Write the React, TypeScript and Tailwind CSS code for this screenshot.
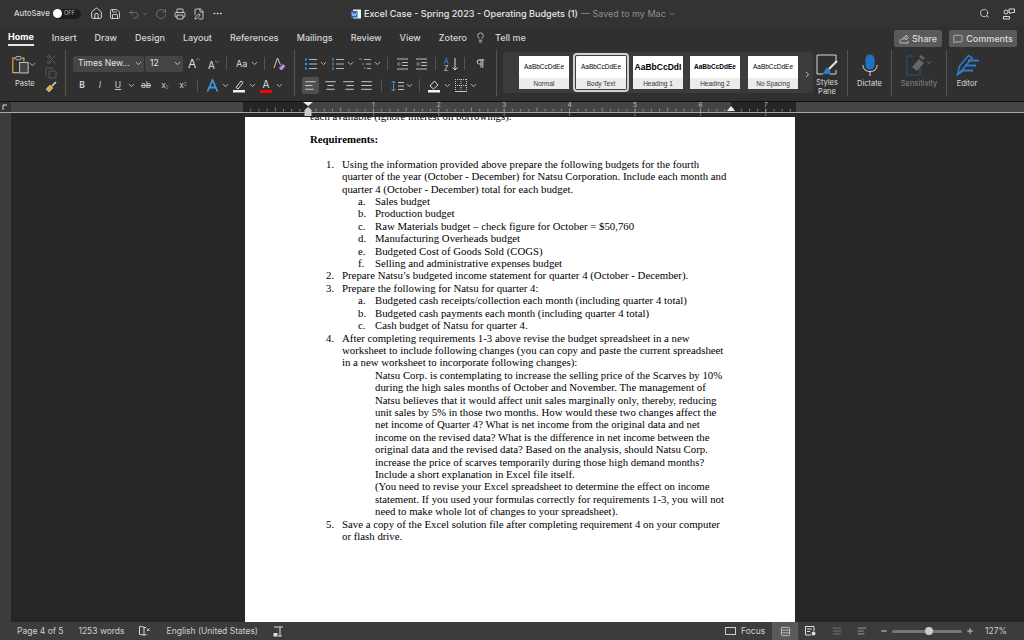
import React from 'react';
import {
  House, Save, Undo2, RotateCw, Printer, MoreHorizontal, Search, Lightbulb, MessageSquare, Scissors, Copy,
  ChevronDown, ChevronRight, AlignLeft, AlignCenter, AlignRight, AlignJustify, FilePen, Rows3, Minus, Plus,
  Pilcrow,
} from 'lucide-react';

const ui = "font-['Inter',sans-serif]";

const tabs = ['Insert', 'Draw', 'Design', 'Layout', 'References', 'Mailings', 'Review', 'View', 'Zotero'];

const lines: { t: string; n?: string; cls: string }[] = [
  { n: '1.', t: 'Using the information provided above prepare the following budgets for the fourth', cls: 'ml-[16px]' },
  { t: 'quarter of the year (October - December) for Natsu Corporation. Include each month and', cls: 'ml-[32px]' },
  { t: 'quarter 4 (October - December) total for each budget.', cls: 'ml-[32px]' },
  { n: 'a.', t: 'Sales budget', cls: 'ml-[48px]' },
  { n: 'b.', t: 'Production budget', cls: 'ml-[48px]' },
  { n: 'c.', t: 'Raw Materials budget – check figure for October = $50,760', cls: 'ml-[48px]' },
  { n: 'd.', t: 'Manufacturing Overheads budget', cls: 'ml-[48px]' },
  { n: 'e.', t: 'Budgeted Cost of Goods Sold (COGS)', cls: 'ml-[48px]' },
  { n: 'f.', t: 'Selling and administrative expenses budget', cls: 'ml-[48px]' },
  { n: '2.', t: 'Prepare Natsu’s budgeted income statement for quarter 4 (October - December).', cls: 'ml-[16px]' },
  { n: '3.', t: 'Prepare the following for Natsu for quarter 4:', cls: 'ml-[16px]' },
  { n: 'a.', t: 'Budgeted cash receipts/collection each month (including quarter 4 total)', cls: 'ml-[48px]' },
  { n: 'b.', t: 'Budgeted cash payments each month (including quarter 4 total)', cls: 'ml-[48px]' },
  { n: 'c.', t: 'Cash budget of Natsu for quarter 4.', cls: 'ml-[48px]' },
  { n: '4.', t: 'After completing requirements 1-3 above revise the budget spreadsheet in a new', cls: 'ml-[16px]' },
  { t: 'worksheet to include following changes (you can copy and paste the current spreadsheet', cls: 'ml-[32px]' },
  { t: 'in a new worksheet to incorporate following changes):', cls: 'ml-[32px]' },
  { t: 'Natsu Corp. is contemplating to increase the selling price of the Scarves by 10%', cls: 'ml-[65px]' },
  { t: 'during the high sales months of October and November. The management of', cls: 'ml-[65px]' },
  { t: 'Natsu believes that it would affect unit sales marginally only, thereby, reducing', cls: 'ml-[65px]' },
  { t: 'unit sales by 5% in those two months. How would these two changes affect the', cls: 'ml-[65px]' },
  { t: 'net income of Quarter 4? What is net income from the original data and net', cls: 'ml-[65px]' },
  { t: 'income on the revised data? What is the difference in net income between the', cls: 'ml-[65px]' },
  { t: 'original data and the revised data? Based on the analysis, should Natsu Corp.', cls: 'ml-[65px]' },
  { t: 'increase the price of scarves temporarily during those high demand months?', cls: 'ml-[65px]' },
  { t: 'Include a short explanation in Excel file itself.', cls: 'ml-[65px]' },
  { t: '(You need to revise your Excel spreadsheet to determine the effect on income', cls: 'ml-[65px]' },
  { t: 'statement. If you used your formulas correctly for requirements 1-3, you will not', cls: 'ml-[65px]' },
  { t: 'need to make whole lot of changes to your spreadsheet).', cls: 'ml-[65px]' },
  { n: '5.', t: 'Save a copy of the Excel solution file after completing requirement 4 on your computer', cls: 'ml-[16px]' },
  { t: 'or flash drive.', cls: 'ml-[32px]' },
];

const styleCards: { label: string; ml: string; cls: string }[] = [
  { label: 'Normal', ml: 'ml-[16px]', cls: 'text-[6.5px] font-medium' },
  { label: 'Body Text', ml: 'ml-[7px]', cls: 'text-[6.5px] font-medium' },
  { label: 'Heading 1', ml: 'ml-[7px]', cls: 'text-[8.5px] font-bold' },
  { label: 'Heading 2', ml: 'ml-[7px]', cls: 'text-[6.5px] font-semibold' },
  { label: 'No Spacing', ml: 'ml-[8px]', cls: 'text-[6.5px] font-medium' },
];

function Chev({ className = '' }: { className?: string }) {
  return <ChevronDown size={9} strokeWidth={2.2} className={`text-[#d0d0d0] shrink-0 ${className}`} />;
}

function Sep({ className = 'h-[14px]' }: { className?: string }) {
  return <span className={`w-px bg-[#555555] shrink-0 ${className}`} />;
}

function PasteIcon() {
  return (
    <svg width="20" height="21" viewBox="0 0 20 21" fill="none">
      <path d="M4 3H1V20H8" stroke="#e0a64e" strokeWidth="1.4" />
      <path d="M11 3H14V7" stroke="#e0a64e" strokeWidth="1.4" />
      <rect x="4.5" y="1" width="6" height="4" rx="1" fill="#303030" stroke="#cfcfcf" />
      <rect x="9" y="8" width="10" height="12.5" fill="#444" stroke="#ddd" />
    </svg>
  );
}

function BrushIcon() {
  return (
    <svg width="12" height="12" viewBox="0 0 12 12" fill="none">
      <path d="M1 8L5 4L8 7L4 11Z" fill="#e0a64e" stroke="#e8d4a0" strokeWidth="0.6" />
      <path d="M7 5L11 1" stroke="#ddd" strokeWidth="1.6" />
    </svg>
  );
}

function GrowA({ small }: { small?: boolean }) {
  return (
    <span className={`flex items-start text-[#dcdcdc] leading-none ${small ? 'ml-[8px] w-[10px] text-[10px] pt-[2px]' : 'ml-[5px] w-[12px] text-[12px]'}`}>
      A
      <svg width="4" height="3" viewBox="0 0 4 3" className="shrink-0" fill="none">
        <path d={small ? 'M0 0.5L2 2.5L4 0.5' : 'M0 2.5L2 0.5L4 2.5'} stroke="#4a9fe8" strokeWidth="0.8" />
      </svg>
    </span>
  );
}

function TextFx() {
  return (
    <svg width="13" height="13" viewBox="0 0 13 13" fill="none">
      <path d="M1.5 12.5L6.5 1L11.5 12.5M3.8 8.5H9.2" stroke="#3f94de" strokeWidth="1.8" />
    </svg>
  );
}

function Pen() {
  return (
    <svg width="14" height="14" viewBox="0 0 14 14" fill="none">
      <path d="M4 8.5L9 2L11 3.5L6 10Z" stroke="#ddd" />
      <rect x="1" y="11" width="12" height="2.5" fill="#f2f2f2" />
    </svg>
  );
}

function ColorA() {
  return (
    <span className="ml-[3px] w-[12px] flex flex-col items-center leading-none">
      <span className="text-[10px] h-[11px] text-[#ddd]">A</span>
      <span className="w-[12px] h-[3px] bg-[#ff0000]" />
    </span>
  );
}

function FillIcon() {
  return (
    <svg width="14" height="14" viewBox="0 0 14 14" fill="none">
      <path d="M3 7L7.5 2L11 6L6.5 10Z" stroke="#ddd" />
      <rect x="1" y="11" width="12" height="2.5" fill="#f2f2f2" />
    </svg>
  );
}

function BordersIcon() {
  return (
    <svg width="12" height="13" viewBox="0 0 12 13" fill="none" stroke="#c4c4c4" strokeDasharray="1 1">
      <path d="M0 0.5H12M0 6.5H12M6 0V13M0.5 0V13M11.5 0V13" />
      <path d="M0 12.5H12" strokeDasharray="none" />
    </svg>
  );
}

function SpacingIcon() {
  return (
    <svg width="13" height="12" viewBox="0 0 13 12" fill="none">
      <path d="M2.5 1V11M0.5 3L2.5 1L4.5 3M0.5 9L2.5 11L4.5 9" stroke="#3f94de" />
      <path d="M7 2.5H13M7 6H13M7 9.5H13" stroke="#c4c4c4" />
    </svg>
  );
}

function SortIcon() {
  return (
    <svg width="16" height="14" viewBox="0 0 16 14" fill="none">
      <text x="0" y="6.5" fontSize="7" fill="#3f94de" fontFamily="Inter">A</text>
      <text x="0" y="13.5" fontSize="7" fill="#ddd" fontFamily="Inter">Z</text>
      <path d="M11 1V13M8.5 10.5L11 13L13.5 10.5" stroke="#ddd" />
    </svg>
  );
}

function ClearFormat() {
  return (
    <svg width="13" height="14" viewBox="0 0 13 14" fill="none">
      <path d="M1 11L4.5 1L7.5 8" stroke="#ccc" />
      <path d="M6 11L10 7L12.5 9L9 13H7.5Z" fill="#c58ad8" />
    </svg>
  );
}

function ListIcon({ kind }: { kind: 'bullet' | 'number' | 'multi' }) {
  return (
    <svg width="12" height="12" viewBox="0 0 12 12" fill="none">
      {kind === 'bullet' && (
        <path d="M0 1.5H2M0 6H2M0 10.5H2" stroke="#3f94de" strokeWidth="2" />
      )}
      {kind === 'number' && <path d="M1 0V3M1 4.5V7.5M1 9V12" stroke="#3f94de" strokeWidth="1.2" />}
      {kind === 'multi' && <path d="M0 1H3M4 5V7M6 9V11" stroke="#3f94de" strokeWidth="1.2" />}
      <path d={kind === 'multi' ? 'M5 1.5H12M7 6H12M8 10.5H12' : 'M4 1.5H12M4 6H12M4 10.5H12'} stroke="#b4b4b4" />
    </svg>
  );
}

function IndentIcon({ dir }: { dir: 'in' | 'out' }) {
  return (
    <svg width="11" height="12" viewBox="0 0 11 12" fill="none">
      <path d="M0 1H11M5 4.5H11M5 7.5H11M0 11H11" stroke="#bdbdbd" />
      <path d={dir === 'out' ? 'M4 6H0.5M2.5 4L0.5 6L2.5 8' : 'M0 6H3.5M1.5 4L3.5 6L1.5 8'} stroke="#3f94de" />
    </svg>
  );
}

function StylesPaneIcon() {
  return (
    <svg width="22" height="21" viewBox="0 0 22 21" fill="none">
      <path d="M20 9V1H1V20H7M20 16V20H14" stroke="#d8d8d8" />
      <path d="M21 7L13 15" stroke="#e0e0e0" strokeWidth="2.2" />
      <path d="M11 13.5C9 15 9 18 6 20H14C15 18 14 15 11 13.5Z" fill="#2e7dd0" />
    </svg>
  );
}

function MicIcon() {
  return (
    <svg width="16" height="22" viewBox="0 0 16 22" fill="none">
      <rect x="3.5" y="0.5" width="9" height="15" rx="4.5" fill="#2272c4" />
      <path d="M1 11C1 15.5 4 17.5 8 17.5C12 17.5 15 15.5 15 11M8 17.5V22" stroke="#ddd" />
    </svg>
  );
}

function SensitivityIcon() {
  return (
    <svg width="26" height="22" viewBox="0 0 26 22" fill="none">
      <path d="M1 2H8M1 2V21H14V14" stroke="#24527c" strokeWidth="1.2" />
      <path d="M6 13L13 5L18 9L11 17Z" fill="#666" />
      <path d="M13 3L15 1L19 4L17 6Z" fill="#666" />
      <path d="M21 7.5L23 9.5L25 7.5" stroke="#777" />
    </svg>
  );
}

function EditorIcon() {
  return (
    <svg width="23" height="22" viewBox="0 0 23 22" fill="none">
      <path d="M1.5 20.5L3.5 12L12.5 1.5L16 4L7 15Z" stroke="#2e7dd0" strokeWidth="1.5" />
      <path d="M1.5 20.5L7 17" stroke="#2e7dd0" strokeWidth="1.5" />
      <path d="M12 6.5H23M9 11.5H20M7 16.5H17" stroke="#2e7dd0" strokeWidth="2" />
    </svg>
  );
}

function DocIcon() {
  return (
    <svg width="10" height="10" viewBox="0 0 10 10">
      <rect x="2" y="0.5" width="8" height="9" fill="#f2f2f2" />
      <rect x="0" y="2" width="6.5" height="6.5" fill="#2466c4" />
      <path d="M1 3.5L2 7L3.2 4.5L4.4 7L5.5 3.5" stroke="#fff" strokeWidth="0.6" fill="none" />
    </svg>
  );
}

function PeopleIcon() {
  return (
    <svg width="12" height="12" viewBox="0 0 12 12" fill="none" stroke="#ddd">
      <circle cx="3" cy="4" r="2" />
      <path d="M0.5 11V8.5H6.5V11Z" />
      <path d="M6 1H11.5V4.5H8.5L7 6V4.5H6Z" />
    </svg>
  );
}

function BookX() {
  return (
    <svg width="11" height="10" viewBox="0 0 11 10" fill="none" stroke="#ddd">
      <path d="M5 1.5C4 0.5 2 0.5 0.5 0.5V8.5C2 8.5 4 8.5 5 9.5V1.5Z" />
      <path d="M5 1.5H7M5 9.5C6 8.5 7 8.5 8 8.5" />
      <path d="M8 2.5L10.5 5M10.5 2.5L8 5" />
    </svg>
  );
}

function TrackIcon() {
  return (
    <svg width="11" height="11" viewBox="0 0 11 11" fill="none">
      <path d="M1 1H10M7 1V10M5 10H9" stroke="#ddd" />
      <rect x="0.5" y="7" width="4" height="3.5" fill="#ddd" />
    </svg>
  );
}

function WebIcon() {
  return (
    <svg width="11" height="10" viewBox="0 0 11 10" fill="none" stroke="#ddd">
      <path d="M6 9H0.5V0.5H9V5M2 3H7M2 5.5H5" />
      <circle cx="8.5" cy="7.5" r="2" fill="#ddd" stroke="none" />
    </svg>
  );
}

function Ruler() {
  const marks: React.ReactNode[] = [];
  const x0 = 308;
  const step = 65.4;
  for (let i = -1; i < 8; i++) {
    for (let j = 0; j < 8; j++) {
      const x = x0 + (i + j / 8) * step;
      if (x < 245 || x > 795) continue;
      marks.push(
        <line key={`${i}-${j}`} x1={x} x2={x} y1={j === 4 ? 107.5 : 109} y2={111.5} stroke="#a8a8a8" strokeWidth="0.7" />,
      );
    }
    if (i > 0) {
      marks.push(
        <text key={`n${i}`} x={x0 + i * step} y="107" fontSize="6.5" fill="#c0c0c0" textAnchor="middle" fontFamily="Inter">{i}</text>,
      );
      marks.push(<line key={`l${i}`} x1={x0 + i * step} x2={x0 + i * step} y1="108" y2="116" stroke="#999" strokeWidth="0.7" />);
    }
  }
  return (
    <svg width="1024" height="15" viewBox="0 102 1024 15" className="block">
      <rect x="0" y="102" width="11" height="11" fill="#333" />
      <rect x="11" y="102" width="1013" height="11" fill="#454545" />
      <rect x="243" y="102" width="65" height="11" fill="#252525" />
      <rect x="731" y="102" width="65" height="11" fill="#252525" />
      <rect x="0" y="112" width="1024" height="1" fill="#a8a8a8" />
      <rect x="0" y="113" width="11" height="4" fill="#3c3c3c" />
      <rect x="11" y="113" width="1013" height="4" fill="#262626" />
      {marks}
      <path d="M303 102H313L308 106Z" fill="#eee" />
      <path d="M308 107L311.5 110V116H304.5V110Z" fill="#ccc" />
      <path d="M727 111L731 106L735 111Z" fill="#eee" />
      <path d="M3 110V105H7" stroke="#ddd" fill="none" />
    </svg>
  );
}

export default function App() {
  return (
    <div className={`w-[1024px] h-[640px] overflow-hidden flex flex-col bg-[#262626] text-[#e2e2e2] ${ui}`}>
      {/* title bar */}
      <div className="h-[27px] bg-[#333333] flex items-center shrink-0">
        <span className="ml-[14px] w-[35px] text-[7.8px] font-medium text-[#d8d8d8]">AutoSave</span>
        <span className="ml-[4px] w-[28px] h-[10px] rounded-full bg-[#1c1c1c] flex items-center">
          <span className="w-[9px] h-[9px] rounded-full bg-white" />
          <span className="ml-[2px] text-[5.5px] text-[#bbb]">OFF</span>
        </span>
        <House size={13} strokeWidth={1.7} className="ml-[9px] text-[#e0e0e0]" />
        <Save size={12} strokeWidth={1.7} className="ml-[6px] text-[#e0e0e0]" />
        <Undo2 size={12} strokeWidth={1.7} className="ml-[7px] text-[#777]" />
        <ChevronDown size={8} strokeWidth={2} className="ml-[1px] text-[#777]" />
        <RotateCw size={12} strokeWidth={1.7} className="ml-[6px] text-[#777]" />
        <Printer size={12} strokeWidth={1.7} className="ml-[7px] text-[#e0e0e0]" />
        <FilePen size={12} strokeWidth={1.7} className="ml-[7px] text-[#e0e0e0]" />
        <MoreHorizontal size={11} strokeWidth={2} className="ml-[7px] text-[#e0e0e0]" />
        <span className="ml-[128px]"><DocIcon /></span>
        <span className="ml-[3px] text-[9.1px] font-medium whitespace-nowrap text-[#e6e6e6]">Excel Case - Spring 2023 - Operating Budgets (1)</span>
        <span className="ml-[3px] text-[9px] whitespace-nowrap text-[#8f8f8f]">— Saved to my Mac</span>
        <ChevronDown size={8} strokeWidth={2} className="ml-[2px] text-[#8f8f8f]" />
        <Search size={11} strokeWidth={1.7} className="ml-auto text-[#ddd]" />
        <span className="ml-[13px] mr-[9px]"><PeopleIcon /></span>
      </div>

      {/* tab row */}
      <div className="h-[23px] bg-[#303030] flex items-center shrink-0 text-[9px] font-medium text-[#d4d4d4]">
        <div className="flex items-center gap-[18px] ml-[8px] h-[19px] self-start">
          <span className="h-full pt-[2px] flex items-center border-b-2 border-[#e6e6e6] font-bold text-white">Home</span>
          {tabs.map((label) => (
            <span key={label} className="pt-[2px]">{label}</span>
          ))}
        </div>
        <div className="flex items-center h-[19px] self-start pt-[2px]">
          <Lightbulb size={11} strokeWidth={1.7} className="ml-[8px] text-[#ddd]" />
          <span className="ml-[9px]">Tell me</span>
        </div>
        <span className="ml-auto w-[48px] h-[17px] rounded-[2px] bg-[#5a5a5a] flex items-center justify-center gap-[3px] text-[#dcdcdc]">
          <svg width="10" height="10" viewBox="0 0 10 10" fill="none" stroke="#bbb"><path d="M1 5V9H9V7M3 6C3 4 5 3 7 3V1L9.5 3.5L7 6V4.5C5 4.5 4 5 3 6Z" /></svg>
          Share
        </span>
        <span className="ml-[7px] mr-[7px] w-[68px] h-[17px] rounded-[2px] bg-[#5a5a5a] flex items-center justify-center gap-[3px] text-[#dcdcdc]">
          <MessageSquare size={10} strokeWidth={1.6} />Comments
        </span>
      </div>

      {/* ribbon */}
      <div className="h-[52px] bg-[#303030] flex items-start shrink-0 border-b border-[#111]">
        {/* clipboard */}
        <div className="w-[65px] flex pl-[12px] pt-[4px] shrink-0">
          <div className="flex flex-col w-[25px]">
            <div className="flex items-center"><PasteIcon /><Chev className="-ml-px" /></div>
            <span className="ml-[3px] mt-[4px] text-[7.5px] leading-[9px] text-[#ddd]">Paste</span>
          </div>
          <div className="flex flex-col items-center ml-[8px] gap-[2px] text-[#666]">
            <Scissors size={11} strokeWidth={1.6} />
            <Copy size={12} strokeWidth={1.6} />
            <BrushIcon />
          </div>
        </div>
        <Sep className="h-[46px]" />

        {/* font */}
        <div className="w-[228px] pl-[7px] shrink-0 flex flex-col">
          <div className="flex items-center h-[17px] mt-[5px]">
            <span className="w-[71px] h-[16px] rounded-[2px] bg-[#454545] flex items-center pl-[5px] text-[8.5px] text-[#e6e6e6]">
              Times New...<ChevronDown size={9} strokeWidth={2} className="ml-auto mr-[1px]" />
            </span>
            <span className="ml-[1px] w-[38px] h-[16px] rounded-[2px] bg-[#454545] flex items-center pl-[5px] text-[8.5px] text-[#e6e6e6]">
              12<ChevronDown size={9} strokeWidth={2} className="ml-auto mr-[1px]" />
            </span>
            <GrowA />
            <GrowA small />
            <Sep className="h-[13px] ml-[8px]" />
            <span className="ml-[9px] w-[12px] text-[9px] text-[#ddd]">Aa</span>
            <Chev className="ml-[2px]" />
            <Sep className="h-[13px] ml-[5px]" />
            <span className="ml-[8px]"><ClearFormat /></span>
          </div>
          <div className="flex items-center h-[17px] mt-[5px] text-[8.5px] text-[#ccc]">
            <span className="ml-[4px] w-[10px] text-center font-bold">B</span>
            <span className="ml-[8px] w-[10px] text-center italic">I</span>
            <span className="ml-[8px] w-[10px] text-center underline">U</span>
            <Chev className="ml-[4px]" />
            <span className="ml-[4px] w-[12px] text-center line-through">ab</span>
            <span className="ml-[7px] w-[12px] text-center">x<sub className="text-[5px] text-[#4a9fe8]">2</sub></span>
            <span className="ml-[6px] w-[12px] text-center">x<sup className="text-[5px] text-[#4a9fe8]">2</sup></span>
            <Sep className="h-[13px] ml-[8px]" />
            <span className="ml-[8px]"><TextFx /></span>
            <Chev className="ml-[2px]" />
            <span className="ml-[2px]"><Pen /></span>
            <Chev className="ml-[2px]" />
            <ColorA />
            <Chev className="ml-[3px]" />
          </div>
        </div>
        <Sep className="h-[46px]" />

        {/* paragraph */}
        <div className="w-[201px] shrink-0 flex flex-col text-[#d4d4d4]">
          <div className="flex items-center h-[17px] mt-[5px]">
            <span className="ml-[10px]"><ListIcon kind="bullet" /></span>
            <Chev className="ml-[2px]" />
            <span className="ml-[4px]"><ListIcon kind="number" /></span>
            <Chev className="ml-[2px]" />
            <span className="ml-[4px]"><ListIcon kind="multi" /></span>
            <Chev className="ml-[2px]" />
            <Sep className="h-[13px] ml-[5px]" />
            <span className="ml-[9px]"><IndentIcon dir="out" /></span>
            <span className="ml-[8px]"><IndentIcon dir="in" /></span>
            <Sep className="h-[13px] ml-[8px]" />
            <span className="ml-[8px]"><SortIcon /></span>
            <Sep className="h-[13px] ml-[4px]" />
            <Pilcrow size={11} strokeWidth={2.4} className="ml-[10px] text-[#bbb]" />
          </div>
          <div className="flex items-center h-[17px] mt-[5px]">
            <span className="ml-[7px] w-[17px] h-[17px] rounded-[2px] bg-[#4f4f4f] flex items-center justify-center"><AlignLeft size={13} strokeWidth={1.7} /></span>
            <AlignCenter size={13} strokeWidth={1.7} className="ml-[5px]" />
            <AlignRight size={13} strokeWidth={1.7} className="ml-[5px]" />
            <AlignJustify size={13} strokeWidth={1.7} className="ml-[5px]" />
            <Sep className="h-[13px] ml-[8px]" />
            <span className="ml-[9px]"><SpacingIcon /></span>
            <Chev className="ml-[1px]" />
            <Sep className="h-[13px] ml-[5px]" />
            <span className="ml-[7px]"><FillIcon /></span>
            <Chev className="ml-[2px]" />
            <span className="ml-[3px]"><BordersIcon /></span>
            <Chev className="ml-[2px]" />
          </div>
        </div>
        <Sep className="h-[46px]" />

        {/* styles gallery */}
        <div className="ml-[6px] mt-[2px] w-[310px] h-[41px] bg-[#3c3c3c] rounded-[3px] flex items-start pt-[4px] shrink-0">
          {styleCards.map((c, i) => (
            <div
              key={c.label}
              className={`${c.ml} w-[50px] h-[33px] bg-white flex flex-col items-center text-black font-['Liberation_Sans',sans-serif] ${i === 1 ? 'outline-2 outline-offset-1 outline-[#d0d0d0] rounded-[1px]' : ''}`}
            >
              <span className={`h-[22px] flex items-center whitespace-nowrap ${c.cls}`}>{c.label === 'Heading 1' ? 'AaBbCcDdI' : 'AaBbCcDdEe'}</span>
              <span className="w-full flex-1 bg-[#ececec] flex items-center justify-center text-[6.5px] text-[#333]">{c.label}</span>
            </div>
          ))}
          <ChevronRight size={9} strokeWidth={2.2} className="ml-[5px] mt-[14px] text-[#ddd]" />
        </div>

        {/* right tools */}
        <div className="w-[34px] pr-[6px] flex flex-col items-center pt-[4px] shrink-0 text-[7.5px] leading-[9px] text-[#ddd]">
          <StylesPaneIcon />
          <span className="mt-[3px] text-center">Styles Pane</span>
        </div>
        <Sep className="h-[46px]" />
        <div className="w-[43px] flex flex-col items-center pt-[4px] shrink-0 text-[7.5px] leading-[9px] text-[#ddd]">
          <MicIcon />
          <span className="mt-[3px]">Dictate</span>
        </div>
        <Sep className="h-[46px]" />
        <div className="w-[54px] flex flex-col items-center pt-[4px] shrink-0 text-[7.5px] leading-[9px] text-[#8a8a8a]">
          <SensitivityIcon />
          <span className="mt-[3px]">Sensitivity</span>
        </div>
        <Sep className="h-[46px]" />
        <div className="w-[40px] flex flex-col items-center pt-[4px] shrink-0 text-[7.5px] leading-[9px] text-[#ddd]">
          <EditorIcon />
          <span className="mt-[3px]">Editor</span>
        </div>
      </div>

      {/* ruler + page */}
      <div className="shrink-0"><Ruler /></div>
      <div className="flex-1 min-h-0 flex">
        <div className="w-[11px] bg-[#3c3c3c] shrink-0" />
        <div className="ml-[234px] w-[550px] bg-white overflow-hidden pl-[65px] text-black font-['Liberation_Serif',serif] text-[10.8px] leading-[12.4px] whitespace-nowrap">
          <div className="-mt-[7px]">each available (ignore interest on borrowings).</div>
          <div className="mt-[11px] font-bold">Requirements:</div>
          <div className="mt-[12px]">
            {lines.map((l, i) => (
              <div key={i} className={`flex ${l.cls}`}>
                {l.n && <span className={`${l.cls === 'ml-[48px]' ? 'w-[17px]' : 'w-[16px]'} shrink-0`}>{l.n}</span>}
                <span>{l.t}</span>
              </div>
            ))}
          </div>
        </div>
      </div>

      {/* status bar */}
      <div className="h-[18px] bg-[#3c3c3c] shrink-0 flex items-center text-[8.5px] text-[#cfcfcf]">
        <span className="ml-[17px]">Page 4 of 5</span>
        <span className="ml-[15px]">1253 words</span>
        <span className="ml-[14px]"><BookX /></span>
        <span className="ml-[17px]">English (United States)</span>
        <span className="ml-[15px]"><TrackIcon /></span>
        <span className="ml-auto w-[11px] h-[8px] border border-[#ccc]" />
        <span className="ml-[5px] w-[23px]">Focus</span>
        <span className="ml-[8px] w-[26px] h-full bg-[#5a5a5a] flex items-center justify-center"><Rows3 size={11} strokeWidth={1.8} /></span>
        <span className="ml-[7px]"><WebIcon /></span>
        <AlignJustify size={10} strokeWidth={1.8} className="ml-[16px] text-[#888]" />
        <AlignLeft size={10} strokeWidth={1.8} className="ml-[15px] text-[#bbb]" />
        <Minus size={8} strokeWidth={3} className="ml-[13px]" />
        <span className="ml-[4px] w-[70px] h-[3px] rounded-full bg-[#777] flex items-center">
          <span className="ml-[33px] w-[8px] h-[8px] rounded-full bg-[#ccc]" />
        </span>
        <Plus size={8} strokeWidth={3} className="ml-[4px]" />
        <span className="ml-[11px] mr-[17px] w-[22px]">127%</span>
      </div>
    </div>
  );
}
